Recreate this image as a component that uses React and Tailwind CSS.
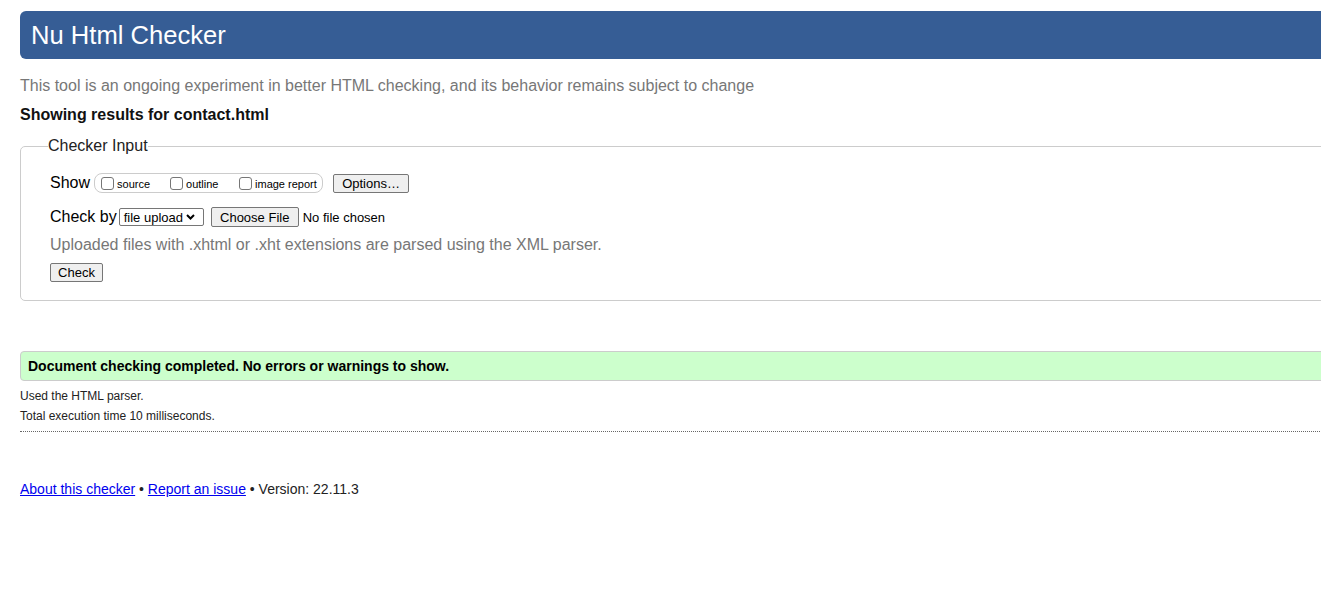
export default function App() {
  const font = { fontFamily: '"Liberation Sans", Arial, sans-serif' };
  return (
    <div className="w-[1321px] h-[608px] overflow-hidden bg-white text-black" style={font}>
      <div className="w-[1420px] pl-[20px]">
        <div className="mt-[11px] h-[48px] bg-[#365d95] rounded-[6px] pl-[11px] flex items-center">
          <h1 className="text-[25.6px] leading-[30px] text-white font-normal">Nu Html Checker</h1>
        </div>
        <p className="mt-[18px] text-[16px] leading-[18px] text-[#777]">
          This tool is an ongoing experiment in better HTML checking, and its behavior remains subject to change
        </p>
        <p className="mt-[11px] text-[16px] leading-[18px] font-bold text-[#111]">Showing results for contact.html</p>

        <fieldset className="mt-[13px] border border-[#ccc] rounded-[5px] pl-[29px] pb-[18px]">
          <legend className="ml-[-2px] text-[16px] leading-[18px] text-[#222]">Checker Input</legend>
          <div className="mt-[18px] flex items-center h-[20px]">
            <span className="text-[16px] leading-[18px] mr-[4px]">Show</span>
            <div className="h-[20px] border border-[#ccc] rounded-[8px] flex items-center pl-[6px] pr-[5px] w-[229px]">
              {[["source", "w-[69px]"], ["outline", "w-[69px]"], ["image report", ""]].map(([l, w]) => (
                <label key={l} className={`flex items-center ${w}`}>
                  <span className="w-[13px] h-[13px] border border-[#767676] rounded-[3px] bg-white mr-[3px]" />
                  <span className="text-[11px] leading-[13px] mt-[3px]">{l}</span>
                </label>
              ))}
            </div>
            <button className="ml-[10px] h-[19px] w-[76px] bg-[#efefef] border border-[#767676] rounded-[2px] text-[13px] leading-[15px] flex items-center justify-center">
              Options…
            </button>
          </div>
          <div className="mt-[14px] flex items-center h-[20px]">
            <span className="text-[16px] leading-[18px] mr-[2px]">Check by</span>
            <div className="h-[18px] w-[85px] border border-[#767676] rounded-[2px] flex items-center pl-[4px] text-[13px] leading-[15px]">
              <span>file upload</span>
              <svg className="ml-[3px]" width="9" height="6" viewBox="0 0 9 6">
                <path d="M1 1 L4.5 4.5 L8 1" fill="none" stroke="black" strokeWidth="2" />
              </svg>
            </div>
            <button className="ml-[7px] h-[20px] w-[88px] bg-[#efefef] border border-[#767676] rounded-[2px] text-[13px] leading-[15px] flex items-center justify-center">
              Choose File
            </button>
            <span className="ml-[4px] text-[13px] leading-[15px]">No file chosen</span>
          </div>
          <p className="mt-[9px] text-[16px] leading-[18px] text-[#777]">
            Uploaded files with .xhtml or .xht extensions are parsed using the XML parser.
          </p>
          <button className="mt-[9px] h-[19px] w-[53px] bg-[#efefef] border border-[#767676] rounded-[2px] text-[13px] leading-[15px] flex items-center justify-center">
            Check
          </button>
        </fieldset>

        <div className="mt-[50px] h-[30px] bg-[#ccffcc] border border-[#ccc] rounded-[4px] pl-[7px] flex items-center">
          <span className="text-[14px] leading-[16px] font-bold">Document checking completed. No errors or warnings to show.</span>
        </div>
        <p className="mt-[8px] text-[12px] leading-[14px] text-[#222]">Used the HTML parser.</p>
        <p className="mt-[6px] text-[12px] leading-[14px] text-[#222]">Total execution time 10 milliseconds.</p>
        <div className="mt-[8px] border-t border-dotted border-[#666]" />
        <p className="mt-[49px] text-[14px] leading-[16px] text-[#222]">
          <a className="text-[#0000ee] underline" href="#">About this checker</a>
          {" • "}
          <a className="text-[#0000ee] underline" href="#">Report an issue</a>
          {" • Version: 22.11.3"}
        </p>
      </div>
    </div>
  );
}
